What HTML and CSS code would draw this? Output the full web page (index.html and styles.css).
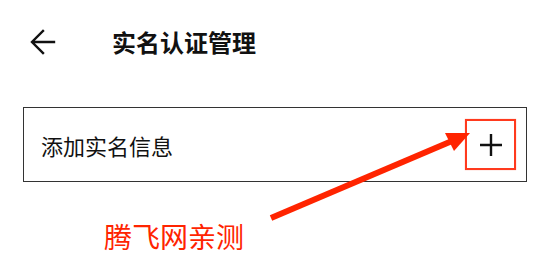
FILE: index.html
```html
<!DOCTYPE html>
<html lang="zh-CN">
<head>
  <meta charset="UTF-8">
  <meta name="viewport" content="width=device-width, initial-scale=1">
  <title>实名认证管理</title>
  <link rel="stylesheet" href="styles.css">
</head>
<body>

  <div class="header">
    <button class="back-btn" aria-label="返回">
      <svg width="26" height="26" viewBox="0 0 26 26">
        <path d="M24 13H3M13 2L2 13l11 11" fill="none" stroke="#111" stroke-width="2.4" stroke-linecap="square"/>
      </svg>
    </button>
    <div class="page-title">实名认证管理</div>
  </div>

  <div class="item">
    <span class="item-text">添加实名信息</span>
    <button class="add-btn" aria-label="添加">
      <svg width="22" height="22" viewBox="0 0 22 22">
        <path d="M11 0v22M0 11h22" stroke="#111" stroke-width="2.4"/>
      </svg>
    </button>
  </div>

  <div class="note">腾飞网亲测</div>

  <!-- 标注箭头 -->
  <svg class="mark-arrow" width="550" height="275" viewBox="0 0 550 275">
    <line x1="271" y1="218" x2="452" y2="141" stroke="#ff2400" stroke-width="6"/>
    <polygon points="470,133 445,133 454,151" fill="#ff2400"/>
  </svg>

</body>
</html>
```

FILE: styles.css
```css
body {
  margin: 0;
  padding: 0;
  background: #fff;
  color: #111;
  font-family: "Noto Sans CJK SC", "Noto Sans", sans-serif;
  width: 550px;
  height: 275px;
  overflow: hidden;
  position: relative;
}

button {
  border: none;
  background: none;
  padding: 0;
  cursor: pointer;
}

.header {
  display: flex;
  align-items: center;
  height: 84px;
  padding-left: 30px;
}

.back-btn {
  display: flex;
  width: 26px;
  height: 26px;
}

.page-title {
  margin-left: 56px;
  font-size: 24px;
  font-weight: 700;
  line-height: 28px;
}

.item {
  display: flex;
  align-items: center;
  justify-content: space-between;
  box-sizing: border-box;
  width: 504px;
  height: 75px;
  margin: 23px 0 0 23px;
  border: 1px solid #333;
  padding: 0 10px 0 17px;
}

.item-text {
  font-size: 22px;
  line-height: 28px;
}

.add-btn {
  display: flex;
  align-items: center;
  justify-content: center;
  box-sizing: border-box;
  width: 51px;
  height: 51px;
  border: 2px solid #ff3a1e;
  box-shadow: 0 0 1px #ff9a88;
}

.note {
  margin: 40px 0 0 104px;
  font-size: 28px;
  line-height: 28px;
  color: #ff2400;
}

.mark-arrow {
  position: absolute;
  top: 0;
  left: 0;
  pointer-events: none;
}
```
